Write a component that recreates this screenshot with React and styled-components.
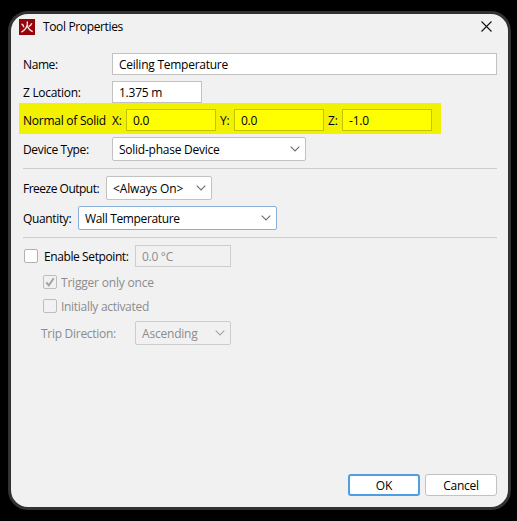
import React from 'react'
import styled, { createGlobalStyle } from 'styled-components'

export default function App() {
  return (
    <>
      <GlobalStyle />
      <Dialog>
        <TitleBar>
          <Logo viewBox="0 0 16 16">
            <rect width="16" height="16" fill="#930508" />
            <path d="M8.3 2.6v2.6Q7.8 10 2.4 13.2M8.3 6.5q1.4 4.6 5.4 6.2" />
            <path d="M2.6 5q2 .9 2.2 3.2M12.8 4.2Q12 6.3 9.9 7.4" />
          </Logo>
          <Title $ls={-0.36}>Tool Properties</Title>
          <Close viewBox="0 0 11 11">
            <path d="M.5.5l10 10M10.5.5l-10 10" />
          </Close>
        </TitleBar>

        <Row $h={22} $mt={14}>
          <Label $w={89} $ls={-0.4}>Name:</Label>
          <Field $w={385}><Text $ls={-0.25}>Ceiling Temperature</Text></Field>
        </Row>
        <Row $h={22} $mt={6}>
          <Label $w={89} $ls={-0.3}>Z Location:</Label>
          <Field $w={90}><Text $ls={-0.25}>1.375 m</Text></Field>
        </Row>
        <Highlight>
          <Label $w={89} $ls={-0.25}>Normal of Solid</Label>
          <Label $w={14} $ls={-0.2}>X:</Label>
          <Field $w={90} $marked><Text $ls={-0.3}>0.0</Text></Field>
          <Label $w={14} $ml={4} $ls={-0.2}>Y:</Label>
          <Field $w={90} $marked><Text $ls={-0.3}>0.0</Text></Field>
          <Label $w={14} $ml={4} $ls={-0.2}>Z:</Label>
          <Field $w={90} $marked><Text $ls={-0.2}>-1.0</Text></Field>
        </Highlight>
        <Row $h={24} $mt={3}>
          <Label $w={89} $ls={-0.35}>Device Type:</Label>
          <Select width={194} ls={-0.25}>Solid-phase Device</Select>
        </Row>
        <Divider />

        <Row $h={24} $mt={7}>
          <Label $w={83} $ls={-0.5}>Freeze Output:</Label>
          <Select width={106} ls={-0.15}>&lt;Always On&gt;</Select>
        </Row>
        <Row $h={24} $mt={6}>
          <Label $w={55} $ls={-0.35}>Quantity:</Label>
          <Select width={199} ls={-0.35} focused>Wall Temperature</Select>
        </Row>
        <Divider />

        <Row $h={22} $mt={7}>
          <Check gap={6} />
          <Label $w={91} $ls={-0.4}>Enable Setpoint:</Label>
          <Field $w={96} $disabled><Text $ls={-0.3}>0.0 °C</Text></Field>
        </Row>
        <Row $h={14} $mt={8} $indent={19} $disabled>
          <Check gap={4} checked disabled />
          <Text $ls={-0.2}>Trigger only once</Text>
        </Row>
        <Row $h={14} $mt={10} $indent={19} $disabled>
          <Check gap={4} disabled />
          <Text $ls={-0.3}>Initially activated</Text>
        </Row>
        <Row $h={24} $mt={8} $indent={18} $disabled>
          <Label $w={94} $ls={-0.28}>Trip Direction:</Label>
          <Select width={96} ls={-0.2} disabled>Ascending</Select>
        </Row>

        <Footer>
          <Button $primary><Text $ls={-0.2}>OK</Text></Button>
          <Button><Text $ls={-0.3}>Cancel</Text></Button>
        </Footer>
      </Dialog>
    </>
  )
}

const Select = ({ width, ls, focused, disabled, children }) => (
  <Combo $w={width} $focused={focused} $disabled={disabled}>
    <Text $ls={ls}>{children}</Text>
    <Chevron viewBox="0 0 10 6" $disabled={disabled}>
      <path d="M.7.7L5 5 9.3.7" />
    </Chevron>
  </Combo>
)

const Check = ({ gap, checked, disabled }) => (
  <Box $gap={gap} $disabled={disabled}>
    {checked && (
      <Tick viewBox="0 0 12 12">
        <path d="M2.3 6.4l2.5 2.9 4.9-7" />
      </Tick>
    )}
  </Box>
)

const GlobalStyle = createGlobalStyle`
* {
  box-sizing: border-box;
}
body {
  margin: 0;
  background: #000;
  font: 12px/16px 'Open Sans', 'Noto Sans', sans-serif;
  color: #000;
}
`

const Dialog = styled.div`
display: flex;
flex-direction: column;
width: 503px;
height: 499px;
margin: 11px 0 0 8px;
padding: 0 11px 11px 12px;
background: #f1f1f1;
border: 3px solid #323232;
border-radius: 20px;
`

const TitleBar = styled.div`
display: flex;
align-items: center;
height: 25px;
margin-left: -4px;
padding-right: 5px;
`

const Logo = styled.svg`
width: 16px;
height: 16px;
path {
  fill: none;
  stroke: #f4e4e4;
  stroke-width: 1.4;
}
`

const Text = styled.span`
padding-top: 2px;
white-space: pre;
letter-spacing: ${({ $ls }) => $ls || 0}px;
`

const Title = styled(Text)`
flex: 1;
margin-left: 8px;
padding-top: 0;
`

const Close = styled.svg`
width: 11px;
height: 11px;
fill: none;
stroke: #111;
stroke-width: 1.1;
`

const Row = styled.div`
display: flex;
flex-shrink: 0;
align-items: center;
height: ${({ $h }) => $h}px;
margin-top: ${({ $mt }) => $mt}px;
padding-left: ${({ $indent }) => $indent || 0}px;
color: ${({ $disabled }) => ($disabled ? '#8c8c8c' : '#000')};
`

const Highlight = styled.div`
display: flex;
align-items: center;
width: 422px;
height: 31px;
margin-left: -4px;
padding: 3px 0 0 4px;
background: #f2f200;
`

const Label = styled(Text)`
flex: none;
width: ${({ $w }) => $w}px;
margin-left: ${({ $ml }) => $ml || 0}px;
`

const Field = styled.div`
display: flex;
align-items: center;
flex: none;
width: ${({ $w }) => $w}px;
height: 22px;
padding-left: 6px;
background: ${({ $marked, $disabled }) => ($marked ? '#ffff00' : $disabled ? '#f1f1f1' : '#fff')};
border: 1px solid ${({ $marked, $disabled }) => ($marked ? '#c3c300' : $disabled ? '#cdcdcd' : '#c2c2c2')};
color: ${({ $disabled }) => ($disabled ? '#8c8c8c' : '#000')};
`

const Combo = styled.div`
display: flex;
align-items: center;
justify-content: space-between;
flex: none;
width: ${({ $w }) => $w}px;
height: 24px;
padding: 0 5px 0 6px;
background: ${({ $disabled }) => ($disabled ? '#f1f1f1' : '#fff')};
border: 1px solid ${({ $focused, $disabled }) => ($focused ? '#89b0da' : $disabled ? '#cdcdcd' : '#c2c2c2')};
border-radius: 2px;
`

const Chevron = styled.svg`
width: 10px;
height: 6px;
fill: none;
stroke: ${({ $disabled }) => ($disabled ? '#a6a6a6' : '#6e6e6e')};
stroke-width: 1.1;
`

const Divider = styled.div`
flex: none;
height: 1px;
margin-top: 7px;
background: #cdcdcd;
`

const Box = styled.div`
flex: none;
width: 14px;
height: 14px;
margin: 0 ${({ $gap }) => $gap}px 0 1px;
background: ${({ $disabled }) => ($disabled ? '#f1f1f1' : '#fff')};
border: 1px solid ${({ $disabled }) => ($disabled ? '#bdbdbd' : '#b0b0b0')};
border-radius: 2px;
`

const Tick = styled.svg`
display: block;
width: 12px;
height: 12px;
fill: none;
stroke: #a3a3a3;
stroke-width: 2;
`

const Footer = styled.div`
display: flex;
justify-content: flex-end;
gap: 5px;
margin-top: auto;
`

const Button = styled.div`
display: flex;
align-items: center;
justify-content: center;
width: 72px;
height: 22px;
background: #fff;
border: ${({ $primary }) => ($primary ? '2px solid #4f9ee3' : '1px solid #c2c2c2')};
border-radius: 3px;
`
